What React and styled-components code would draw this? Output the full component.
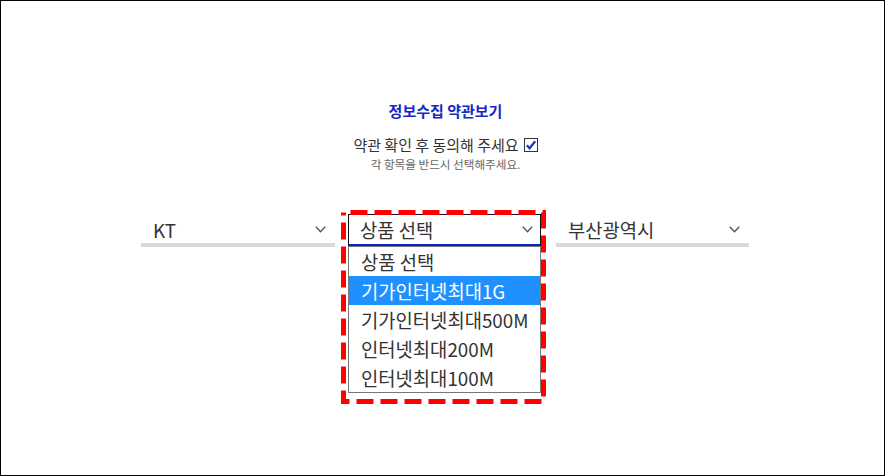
import React from "react";
import styled, { createGlobalStyle } from "styled-components";

const Global = createGlobalStyle`
  html, body { margin: 0; padding: 0; background: #fff; }
  body { font-family: "Noto Sans CJK KR", "Noto Sans", sans-serif; }
`;

const Page = styled.div`
  box-sizing: border-box;
  width: 885px;
  height: 476px;
  border: 1px solid #000;
  padding: 100px 0 0 6px;
  display: flex;
  flex-direction: column;
  align-items: center;
  font-family: "Noto Sans CJK KR", "Noto Sans", sans-serif;
`;

const Title = styled.h2`
  margin: 0;
  font-size: 15px;
  line-height: 20px;
  font-weight: 700;
  color: #1428c4;
`;

const AgreeLine = styled.label`
  margin-top: 14px;
  display: flex;
  align-items: center;
  gap: 5px;
  font-size: 15px;
  line-height: 20px;
  color: #333;
`;

const Hint = styled.p`
  margin: 1px 0 0;
  font-size: 11.6px;
  line-height: 16px;
  color: #666;
`;

const SelectRow = styled.div`
  align-self: flex-start;
  margin: 42px 0 0 134px;
  display: flex;
  align-items: flex-start;
`;

const SelectBox = styled.div`
  position: relative;
  box-sizing: border-box;
  width: ${(p) => p.$w}px;
  margin-left: ${(p) => p.$ml || 0}px;
  height: ${(p) => (p.$open ? 33 : 32)}px;
  margin-top: ${(p) => (p.$open ? 0 : 1)}px;
  display: flex;
  align-items: center;
  justify-content: space-between;
  padding: 0 ${(p) => (p.$open ? 7 : 9)}px 0 ${(p) => (p.$open ? 11 : 12)}px;
  border: ${(p) => (p.$open ? "1px solid #111" : "none")};
  border-bottom: ${(p) => (p.$open ? "3px solid #0a22cc" : "4px solid #d9d9d9")};
  font-size: 18.8px;
  color: #333;
`;

const Chevron = () => (
  <svg width="11" height="7" viewBox="0 0 11 7">
    <path d="M0.8 0.8 L5.5 5.8 L10.2 0.8" fill="none" stroke="#555" strokeWidth="1.4" />
  </svg>
);

const Check = () => (
  <svg width="14" height="14" viewBox="0 0 14 14">
    <rect x="0.5" y="0.5" width="13" height="13" fill="#fff" stroke="#333" />
    <path d="M2.8 7.2 L5.6 10.2 L11.2 3.2" fill="none" stroke="#1637c4" strokeWidth="2.2" />
  </svg>
);

const OptionList = styled.ul`
  position: absolute;
  left: -1px;
  top: 31px;
  box-sizing: border-box;
  width: 193px;
  margin: 0;
  padding: 0;
  list-style: none;
  border: 1px solid #777;
  background: #fff;
`;

const Option = styled.li`
  height: 29px;
  line-height: 29px;
  padding-left: 12px;
  font-size: 18.8px;
  white-space: nowrap;
  color: ${(p) => (p.$active ? "#fff" : "#333")};
  background: ${(p) => (p.$active ? "#1e90ff" : "transparent")};
`;

const Annotation = styled.svg`
  position: absolute;
  left: -8px;
  top: -5px;
  width: 205px;
  height: 194px;
  pointer-events: none;
  overflow: visible;
`;

const options = ["상품 선택", "기가인터넷최대1G", "기가인터넷최대500M", "인터넷최대200M", "인터넷최대100M"];

export default function App() {
  return (
    <>
      <Global />
      <Page>
        <Title>정보수집 약관보기</Title>
        <AgreeLine>
          약관 확인 후 동의해 주세요 <Check />
        </AgreeLine>
        <Hint>각 항목을 반드시 선택해주세요.</Hint>
        <SelectRow>
          <SelectBox $w={194}>
            <span>KT</span>
            <Chevron />
          </SelectBox>
          <SelectBox $w={193} $ml={13} $open>
            <span>상품 선택</span>
            <Chevron />
            <OptionList>
              {options.map((o, i) => (
                <Option key={o} $active={i === 1}>{o}</Option>
              ))}
            </OptionList>
            <Annotation viewBox="0 0 205 194">
              <rect
                x="2.5"
                y="2.5"
                width="200"
                height="189"
                fill="none"
                stroke="#ff0000"
                strokeWidth="5"
                strokeDasharray="17 7"
                strokeDashoffset="-7"
              />
            </Annotation>
          </SelectBox>
          <SelectBox $w={193} $ml={15}>
            <span>부산광역시</span>
            <Chevron />
          </SelectBox>
        </SelectRow>
      </Page>
    </>
  );
}
